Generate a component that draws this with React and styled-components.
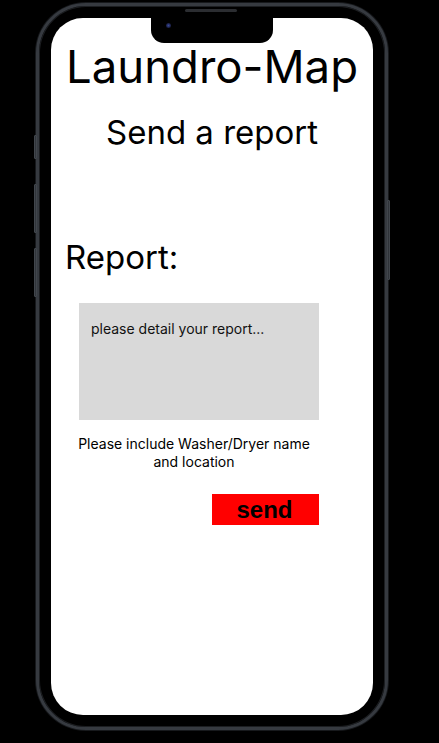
import styled, { createGlobalStyle } from "styled-components";

const GlobalStyle = createGlobalStyle`
  html, body {
    margin: 0;
    padding: 0;
    background: #000;
  }
  body {
    font-family: Inter, "Noto Sans", sans-serif;
  }
`;

const Stage = styled.div`
  width: 439px;
  height: 743px;
  background: #000;
  padding: 3px 0 0 36px;
  box-sizing: border-box;
`;

const Phone = styled.div`
  position: relative;
  width: 352px;
  height: 727px;
  box-sizing: border-box;
  border: 3px solid #363a40;
  border-radius: 50px;
  background: #000;
  padding: 12px;
  box-shadow: inset 0 0 0 1px #1c1e21, 0 0 0 1px #17191c;
`;

const SideButton = styled.span`
  position: absolute;
  top: ${({ $top }) => $top}px;
  height: ${({ $height }) => $height}px;
  ${({ $right }) => ($right ? "right: -5px;" : "left: -5px;")}
  width: 3px;
  border-radius: 1px;
  background: #30343a;
  border: 1px solid #41464c;
  box-sizing: border-box;
`;

const Speaker = styled.span`
  position: absolute;
  top: 3px;
  left: 146px;
  width: 52px;
  height: 3px;
  border-radius: 2px;
  background: #2b2d31;
`;

const Screen = styled.div`
  position: relative;
  width: 322px;
  height: 697px;
  background: #fff;
  border-radius: 32px;
  overflow: hidden;
  display: flex;
  flex-direction: column;
`;

const Notch = styled.div`
  position: absolute;
  top: 0;
  left: 100px;
  width: 122px;
  height: 25px;
  box-sizing: border-box;
  padding: 5px 0 0 15px;
  display: flex;
  align-items: flex-start;
  background: #000;
  border-radius: 0 0 13px 13px;
`;

const Camera = styled.span`
  width: 5px;
  height: 5px;
  border-radius: 50%;
  background: radial-gradient(circle, #3a4a9a 0%, #161a3a 70%);
`;

const Title = styled.h1`
  margin: 21px 0 0;
  font-size: 45.5px;
  font-weight: 400;
  line-height: 56px;
  text-align: center;
  color: #000;
`;

const Subtitle = styled.h2`
  margin: 17px 0 0;
  font-size: 33px;
  font-weight: 400;
  line-height: 40px;
  text-align: center;
  color: #000;
`;

const Label = styled.h3`
  margin: 85px 0 0;
  padding-left: 14px;
  font-size: 33px;
  font-weight: 400;
  line-height: 40px;
  color: #000;
`;

const Form = styled.div`
  margin: 26px 54px 0 28px;
  display: flex;
  flex-direction: column;
`;

const ReportBox = styled.div`
  height: 117px;
  background: #d9d9d9;
  padding: 17px 12px;
  box-sizing: border-box;
  font-size: 14px;
  line-height: 18px;
  color: #111;
`;

const Hint = styled.p`
  margin: 15px 6px 0 -4px;
  font-size: 14px;
  line-height: 18px;
  text-align: center;
  color: #000;
`;

const SendButton = styled.button`
  align-self: flex-end;
  margin-top: 23px;
  width: 107px;
  height: 31px;
  border: none;
  background: #ff0000;
  font-family: "Liberation Sans", Arial, sans-serif;
  font-weight: 700;
  font-size: 24px;
  line-height: 31px;
  padding: 0 2px 0 0;
  color: #000;
`;

export default function App() {
  return (
    <>
      <GlobalStyle />
      <Stage>
        <Phone>
          <SideButton $top={129} $height={24} />
          <SideButton $top={178} $height={49} />
          <SideButton $top={242} $height={49} />
          <SideButton $right $top={194} $height={80} />
          <Speaker />
          <Screen>
            <Notch>
              <Camera />
            </Notch>
            <Title>Laundro-Map</Title>
            <Subtitle>Send a report</Subtitle>
            <Label>Report:</Label>
            <Form>
              <ReportBox>please detail your report...</ReportBox>
              <Hint>Please include Washer/Dryer name and location</Hint>
              <SendButton>send</SendButton>
            </Form>
          </Screen>
        </Phone>
      </Stage>
    </>
  );
}
